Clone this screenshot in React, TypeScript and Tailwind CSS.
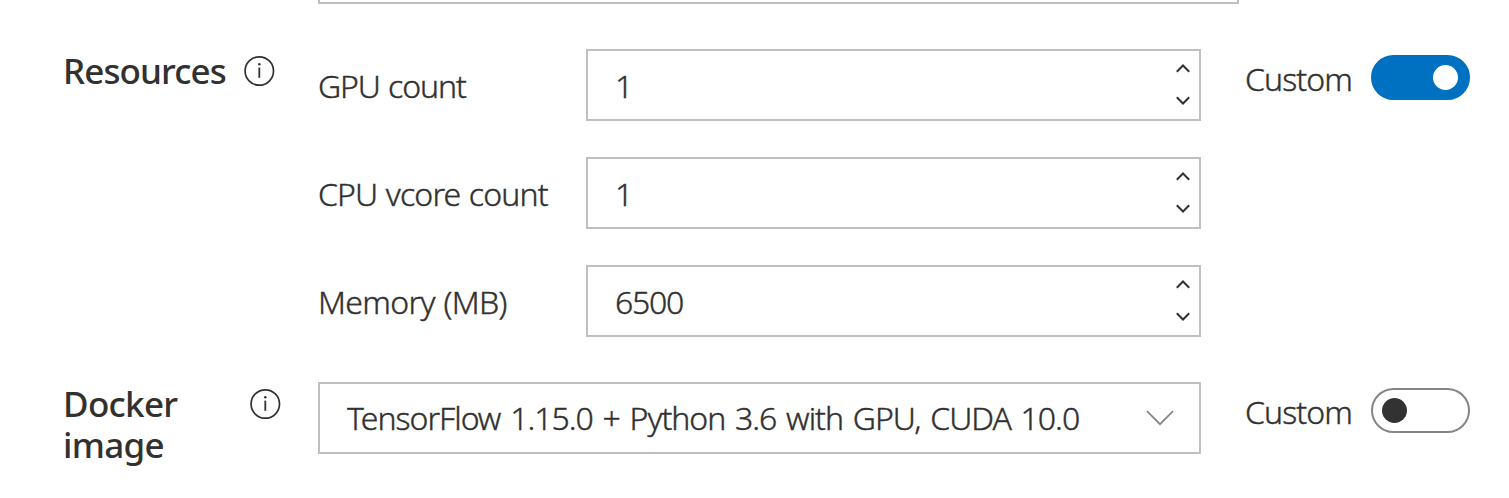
import React from "react";

function Info({ className }: { className: string }) {
  return (
    <svg className={`shrink-0 ${className}`} width="32" height="32" viewBox="0 0 32 32" fill="none">
      <circle cx="16.3" cy="16" r="14.2" stroke="#323130" strokeWidth="1.7" />
      <rect x="15.4" y="12.6" width="1.8" height="10.2" fill="#323130" />
      <circle cx="16.3" cy="9.2" r="1.25" fill="#323130" />
    </svg>
  );
}

function Arrow({ d }: { d: string }) {
  return (
    <svg width="16" height="10" viewBox="0 0 16 10" fill="none">
      <path d={d} stroke="#323130" strokeWidth="2" />
    </svg>
  );
}

function Label({ text, className }: { text: string; className: string }) {
  return (
    <span className={`text-[32px] leading-10 whitespace-nowrap [-webkit-text-stroke:0.4px_#323130] ${className}`}>
      {text}
    </span>
  );
}

function NumberRow({ label, value, labelClass }: { label: string; value: string; labelClass: string }) {
  return (
    <div className="flex h-[72px]">
      <div className="w-[268px] pt-[17px]">
        <Label text={label} className={labelClass} />
      </div>
      <div className="flex w-[615px] justify-between border-2 border-[#c0c0c0] bg-white pr-[8px] pl-[27px]">
        <div className="pt-[15px]">
          <Label text={value} className="tracking-[-1.3px]" />
        </div>
        <div className="flex flex-col gap-[22px] pt-[12px]">
          <Arrow d="M1.8 8.7 8 2.5l6.2 6.2" />
          <Arrow d="M1.8 2.3 8 8.5l6.2-6.2" />
        </div>
      </div>
    </div>
  );
}

function Toggle({ on }: { on: boolean }) {
  return (
    <div className="flex items-start">
      <div className="w-[126px] pt-[4px]">
        <Label text="Custom" className="tracking-[-0.9px]" />
      </div>
      <div
        className={`flex h-[45px] w-[99px] items-center rounded-full border-2 ${
          on ? "justify-end border-[#0071c1] bg-[#0071c1] pr-[10px]" : "border-[#858585] bg-white pl-[9px]"
        }`}
      >
        <div className={`size-[25px] rounded-full ${on ? "bg-white" : "bg-[#323232]"}`} />
      </div>
    </div>
  );
}

export default function App() {
  return (
    <main className="flex h-[498px] w-[1509px] flex-col overflow-hidden bg-white font-['Noto_Sans','Open_Sans',sans-serif] font-light text-[#323130]">
      <div className="ml-[318px] h-[4px] w-[921px] shrink-0 border-x-2 border-b-2 border-[#c0c0c0]" />
      <section className="mt-[45px] flex h-[333px] shrink-0 items-start">
        <div className="flex w-[318px] items-start pl-[63px]">
          <h2 className="w-[180px] pt-px text-[35px] leading-[41px] font-[550] tracking-[-0.9px]">Resources</h2>
          <Info className="mt-[6px]" />
        </div>
        <div className="flex w-[883px] flex-col gap-9">
          <NumberRow label="GPU count" value="1" labelClass="tracking-[-1.1px] [word-spacing:1px]" />
          <NumberRow label="CPU vcore count" value="1" labelClass="tracking-[-0.85px] [word-spacing:1px]" />
          <NumberRow label="Memory (MB)" value="6500" labelClass="tracking-[-0.65px] [word-spacing:1px]" />
        </div>
        <div className="pt-[6px] pl-[44px]">
          <Toggle on />
        </div>
      </section>
      <section className="flex shrink-0 items-start">
        <div className="flex w-[318px] items-start pl-[63px]">
          <h2 className="w-[186px] pt-px text-[35px] leading-[41px] font-[550] tracking-[-0.7px]">
            <span className="block">Docker</span>
            <span className="block">image</span>
          </h2>
          <Info className="mt-[6px]" />
        </div>
        <div className="flex h-[72px] w-[883px] items-start justify-between border-2 border-[#c0c0c0] pr-[24px] pl-[27px]">
          <div className="pt-[14px]">
            <Label
              text="TensorFlow 1.15.0 + Python 3.6 with GPU, CUDA 10.0"
              className="tracking-[-1px] [word-spacing:2.4px]"
            />
          </div>
          <svg className="mt-[25px]" width="30" height="18" viewBox="0 0 30 18" fill="none">
            <path d="M2 2.2 15 15.2 28 2.2" stroke="#858585" strokeWidth="1.7" />
          </svg>
        </div>
        <div className="pt-[6px] pl-[44px]">
          <Toggle on={false} />
        </div>
      </section>
    </main>
  );
}
